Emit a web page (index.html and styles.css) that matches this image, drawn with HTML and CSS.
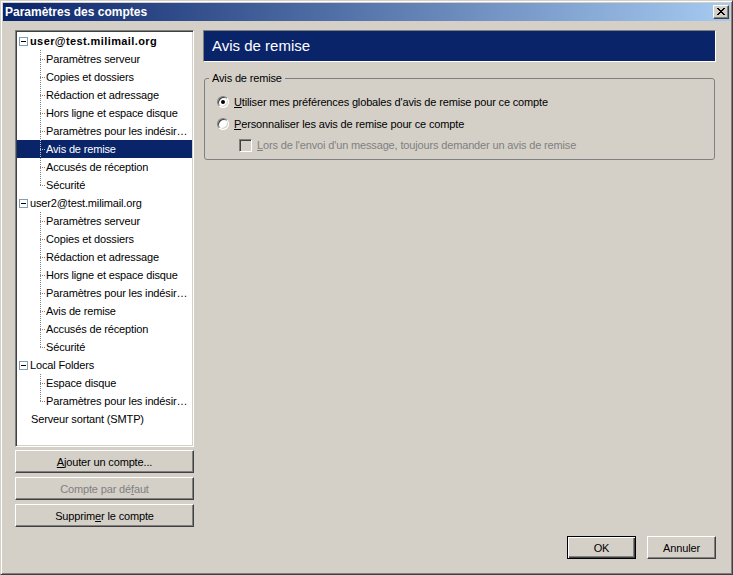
FILE: index.html
```html
<!DOCTYPE html>
<html lang="fr">
<head>
    <meta charset="UTF-8">
    <title>Paramètres des comptes</title>
    <link rel="stylesheet" href="styles.css">
</head>
<body>
    <div class="window">
        <div class="titlebar">
            <span class="title">Paramètres des comptes</span>
            <span class="close">
                <svg width="8" height="7" viewBox="0 0 8 7"><path d="M0 0h2v1h-2zM6 0h2v1h-2zM1 1h2v1h-2zM5 1h2v1h-2zM2 2h4v1h-4zM3 3h2v1h-2zM2 4h4v1h-4zM1 5h2v1h-2zM5 5h2v1h-2zM0 6h2v1h-2zM6 6h2v1h-2z" fill="#000"/></svg>
            </span>
        </div>

        <div class="content">
            <div class="panes">
                <div class="sidebar">
                    <div class="tree">
                        <div class="row account default"><span class="toggle"></span><span class="label">user@test.milimail.org</span></div>
                        <div class="row child"><span class="branch"></span><span class="label">Paramètres serveur</span></div>
                        <div class="row child"><span class="branch"></span><span class="label">Copies et dossiers</span></div>
                        <div class="row child"><span class="branch"></span><span class="label">Rédaction et adressage</span></div>
                        <div class="row child"><span class="branch"></span><span class="label">Hors ligne et espace disque</span></div>
                        <div class="row child"><span class="branch"></span><span class="label">Paramètres pour les indésirables</span></div>
                        <div class="row child selected"><span class="branch"></span><span class="label">Avis de remise</span></div>
                        <div class="row child"><span class="branch"></span><span class="label">Accusés de réception</span></div>
                        <div class="row child last"><span class="branch"></span><span class="label">Sécurité</span></div>

                        <div class="row account"><span class="toggle"></span><span class="label">user2@test.milimail.org</span></div>
                        <div class="row child"><span class="branch"></span><span class="label">Paramètres serveur</span></div>
                        <div class="row child"><span class="branch"></span><span class="label">Copies et dossiers</span></div>
                        <div class="row child"><span class="branch"></span><span class="label">Rédaction et adressage</span></div>
                        <div class="row child"><span class="branch"></span><span class="label">Hors ligne et espace disque</span></div>
                        <div class="row child"><span class="branch"></span><span class="label">Paramètres pour les indésirables</span></div>
                        <div class="row child"><span class="branch"></span><span class="label">Avis de remise</span></div>
                        <div class="row child"><span class="branch"></span><span class="label">Accusés de réception</span></div>
                        <div class="row child last"><span class="branch"></span><span class="label">Sécurité</span></div>

                        <div class="row account"><span class="toggle"></span><span class="label">Local Folders</span></div>
                        <div class="row child"><span class="branch"></span><span class="label">Espace disque</span></div>
                        <div class="row child last"><span class="branch"></span><span class="label">Paramètres pour les indésirables</span></div>

                        <div class="row leaf"><span class="label">Serveur sortant (SMTP)</span></div>
                    </div>
                    <button class="btn side-btn"><u>A</u>jouter un compte...</button>
                    <button class="btn side-btn" disabled>Compte par dé<u>f</u>aut</button>
                    <button class="btn side-btn">Supprim<u>e</u>r le compte</button>
                </div>

                <div class="main">
                    <div class="page-header">Avis de remise</div>
                    <fieldset class="group">
                        <legend>Avis de remise</legend>
                        <div class="option">
                            <span class="radio checked"></span>
                            <span><u>U</u>tiliser mes préférences globales d'avis de remise pour ce compte</span>
                        </div>
                        <div class="option">
                            <span class="radio"></span>
                            <span><u>P</u>ersonnaliser les avis de remise pour ce compte</span>
                        </div>
                        <div class="option sub disabled">
                            <span class="checkbox"></span>
                            <span><u>L</u>ors de l'envoi d'un message, toujours demander un avis de remise</span>
                        </div>
                    </fieldset>
                </div>
            </div>

            <div class="footer">
                <button class="btn default-btn">OK</button>
                <button class="btn">Annuler</button>
            </div>
        </div>
    </div>
</body>
</html>
```

FILE: styles.css
```css
body {
    margin: 0;
    background: #d4d0c8;
    font-family: 'Liberation Sans', Arial, sans-serif;
    font-size: 11px;
    letter-spacing: -0.15px;
    color: #000;
}
.window {
    width: 733px;
    height: 575px;
    box-sizing: border-box;
    border: 1px solid;
    border-color: #d4d0c8 #404040 #404040 #d4d0c8;
    box-shadow: inset 1px 1px #fff, inset -1px -1px #808080;
    padding: 2px;
    display: flex;
    flex-direction: column;
}
.titlebar {
    height: 18px;
    flex: none;
    display: flex;
    align-items: center;
    justify-content: space-between;
    background: linear-gradient(to right, #0a246a, #a6caf0);
}
.title {
    color: #fff;
    font-weight: bold;
    font-size: 12px;
    letter-spacing: 0;
    padding-left: 2px;
}
.close {
    width: 16px;
    height: 14px;
    box-sizing: border-box;
    margin-right: 1px;
    background: #d4d0c8;
    border: 1px solid;
    border-color: #fff #404040 #404040 #fff;
    box-shadow: inset -1px -1px #808080;
    display: flex;
    align-items: center;
    justify-content: center;
    padding: 0 1px 1px 0;
}
.close svg {
    display: block;
}
.content {
    flex: 1;
    display: flex;
    flex-direction: column;
    padding: 9px 14px 13px 12px;
}
.panes {
    flex: 1;
    display: flex;
    gap: 9px;
}
.sidebar {
    width: 179px;
    flex: none;
    display: flex;
    flex-direction: column;
}
.tree {
    height: 417px;
    box-sizing: border-box;
    background: #fff;
    border: 1px solid;
    border-color: #808080 #fff #fff #808080;
    box-shadow: inset 1px 1px #404040, inset -1px -1px #d4d0c8;
    padding: 1px;
    overflow: hidden;
}
.row {
    height: 18px;
    line-height: 18px;
    display: flex;
    align-items: center;
    white-space: nowrap;
}
.label {
    overflow: hidden;
    text-overflow: ellipsis;
    min-width: 0;
    padding-right: 2px;
}
.account {
    padding-left: 2px;
}
.default .label {
    font-weight: bold;
    letter-spacing: 0.4px;
}
.toggle {
    width: 9px;
    height: 9px;
    box-sizing: border-box;
    flex: none;
    margin-right: 2px;
    border: 1px solid #7f9db9;
    background: linear-gradient(#000, #000) center / 5px 1px no-repeat, #fff;
}
.child {
    padding-left: 23px;
    align-items: stretch;
}
.branch {
    width: 6px;
    flex: none;
    background-image:
        repeating-linear-gradient(to bottom, #808080 0 1px, transparent 1px 2px),
        repeating-linear-gradient(to right, #808080 0 1px, transparent 1px 2px);
    background-size: 1px 100%, 6px 1px;
    background-position: 0 0, 0 9px;
    background-repeat: no-repeat;
}
.last .branch {
    background-size: 1px 10px, 6px 1px;
}
.leaf {
    padding-left: 14px;
}
.selected {
    background: #0a246a;
    color: #fff;
}
.selected .branch {
    background-image:
        repeating-linear-gradient(to bottom, #c0c0c0 0 1px, transparent 1px 2px),
        repeating-linear-gradient(to right, #c0c0c0 0 1px, transparent 1px 2px);
}
.btn {
    height: 23px;
    box-sizing: border-box;
    padding: 0;
    background: #d4d0c8;
    border: 1px solid;
    border-color: #fff #404040 #404040 #fff;
    box-shadow: inset -1px -1px #808080;
    font-family: 'Liberation Sans', Arial, sans-serif;
    font-size: 11px;
    letter-spacing: -0.15px;
    color: #000;
}
.btn:disabled {
    color: #808080;
}
.side-btn {
    width: 100%;
    margin-top: 4px;
}
.tree + .side-btn {
    margin-top: 3px;
}
.main {
    flex: 1;
    display: flex;
    flex-direction: column;
}
.page-header {
    height: 32px;
    box-sizing: border-box;
    background: #0a246a;
    border: 1px solid;
    border-color: #808080 #fff #fff #808080;
    color: #fff;
    font-size: 15px;
    letter-spacing: 0;
    line-height: 29px;
    padding-left: 8px;
}
.group {
    margin: 9px 1px 0 1px;
    padding: 6px 12px 4px 12px;
    border: 1px solid #808080;
    border-radius: 3px;
}
.group legend {
    margin-left: -8px;
    padding: 0 3px;
    line-height: 14px;
}
.option {
    height: 22px;
    display: flex;
    align-items: center;
    gap: 5px;
}
.option.sub {
    height: 20px;
    padding-left: 22px;
}
.disabled {
    color: #808080;
}
.radio {
    width: 12px;
    height: 12px;
    box-sizing: border-box;
    flex: none;
    border-radius: 50%;
    border: 1px solid;
    border-color: #808080 #fff #fff #808080;
    box-shadow: inset 1px 1px #404040, inset -1px -1px #d4d0c8;
    background: #fff;
    display: flex;
    align-items: center;
    justify-content: center;
}
.radio.checked::after {
    content: "";
    width: 4px;
    height: 4px;
    border-radius: 50%;
    background: #000;
}
.checkbox {
    width: 13px;
    height: 13px;
    box-sizing: border-box;
    flex: none;
    border: 1px solid;
    border-color: #808080 #fff #fff #808080;
    box-shadow: inset 1px 1px #404040, inset -1px -1px #d4d0c8;
    background: #d4d0c8;
}
.footer {
    flex: none;
    margin-top: 9px;
    display: flex;
    justify-content: flex-end;
    gap: 11px;
}
.footer .btn {
    width: 69px;
}
.default-btn {
    border: 1px solid #000;
    box-shadow: inset 1px 1px #fff, inset -1px -1px #404040, inset -2px -2px #808080;
}
```
